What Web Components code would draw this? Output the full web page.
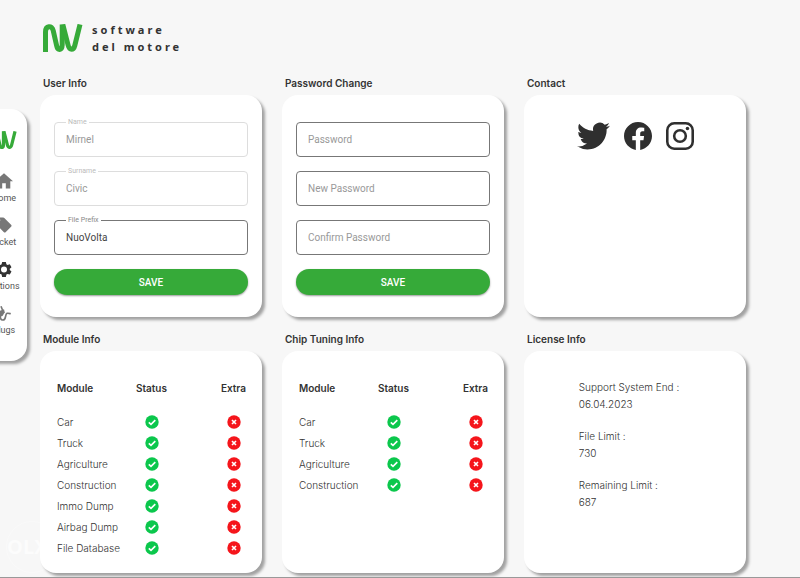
<!DOCTYPE html>
<html lang="en">
<head>
<meta charset="utf-8">
<meta name="viewport" content="width=device-width, initial-scale=1">
<title>Software del Motore</title>
<style>
  :root {
    --green: #36aa39;
    --ink: #333;
    --page: #f7f7f7;
    --shadow: 3px 3px 3px rgba(0, 0, 0, 0.35);
  }

  body {
    margin: 0;
    background: var(--page);
    color: var(--ink);
    font-family: Inter, "Open Sans", sans-serif;
    font-size: 10px;
  }
</style>
</head>
<body>
<app-shell>
  <side-nav slot="nav">
    <nav-item icon="home" href="#home">Home</nav-item>
    <nav-item icon="tag" href="#ticket">Ticket</nav-item>
    <nav-item icon="gear" href="#options" active>Options</nav-item>
    <nav-item icon="plug" href="#plugs">Plugs</nav-item>
  </side-nav>

  <info-panel heading="User Info">
    <settings-form>
      <text-field label="Name" value="Mirnel" disabled></text-field>
      <text-field label="Surname" value="Civic" disabled></text-field>
      <text-field label="File Prefix" value="NuoVolta"></text-field>
    </settings-form>
  </info-panel>

  <info-panel heading="Password Change">
    <settings-form>
      <text-field label="Password" type="password"></text-field>
      <text-field label="New Password" type="password"></text-field>
      <text-field label="Confirm Password" type="password"></text-field>
    </settings-form>
  </info-panel>

  <info-panel heading="Contact">
    <social-links></social-links>
  </info-panel>

  <info-panel heading="Module Info">
    <module-table modules="Car,Truck,Agriculture,Construction,Immo Dump,Airbag Dump,File Database"></module-table>
  </info-panel>

  <info-panel heading="Chip Tuning Info">
    <module-table modules="Car,Truck,Agriculture,Construction"></module-table>
  </info-panel>

  <info-panel heading="License Info">
    <license-list>
      <license-entry label="Support System End :">06.04.2023</license-entry>
      <license-entry label="File Limit :">730</license-entry>
      <license-entry label="Remaining Limit :">687</license-entry>
    </license-list>
  </info-panel>
</app-shell>

<script>
const navIcons = {
  home: '<path d="M9.600 22v-7h4.800v7h6v-9.600H24L12 1.600 0 12.400h3.600V22z"/>',
  tag: '<path d="M21.400 11.600l-9-9A2 2 0 0 0 11 2H4a2 2 0 0 0-2 2v7c0 .6.200 1.100.600 1.400l9 9a2 2 0 0 0 2.800 0l7-7a2 2 0 0 0 0-2.800zM5.500 7a1.500 1.500 0 1 1 0-3 1.500 1.500 0 0 1 0 3z"/>',
  gear: '<path fill-rule="evenodd" d="M9.500 2.500h5l.7 3.100 1.500.9 3-.9 2.300 4-2.300 2.100v1.600l2.300 2.100-2.300 4-3-.9-1.500.9-.7 3.100h-5l-.7-3.100-1.500-.9-3 .9-2.300-4 2.300-2.100v-1.600L2 9.600l2.300-4 3 .9 1.500-.9zM12 8.500a4 4 0 1 0 0 8 4 4 0 0 0 0-8z"/>',
  plug: '<path d="M1 11l11-4 1 4-3 5-5 1.500z"/><path d="M3 5l2 5M8 3l2 5" fill="none" stroke="currentColor" stroke-width="2.200"/><path d="M7 16c0 7 6 7 7 1s3-5 7-4" fill="none" stroke="currentColor" stroke-width="2.200"/>'
}

class BrandMark extends HTMLElement {
  constructor() {
    super()
    this.attachShadow({ mode: 'open' })
    this.shadowRoot.innerHTML = `
      <style>
        :host {
          display: block;
          width: 40px;
          color: var(--green);
        }

        svg {
          display: block;
          width: 100%;
        }
      </style>
      <svg viewBox="0 0 40 28" fill="none" stroke="currentColor" stroke-width="5" stroke-linejoin="round" role="img" aria-label="NV">
        <path d="M2.500 28V8C2.500 1.500 9 1 10.200 6.500L13.600 21.500C14.600 26.800 19 26.800 19.200 21V0.500"/>
        <path d="M19.800 0.500L25.200 21.500C26.500 26.500 30.500 26.500 31.800 21.500L37 0.500"/>
      </svg>
    `
  }
}

class NavItem extends HTMLElement {
  constructor() {
    super()
    this.attachShadow({ mode: 'open' })
  }

  connectedCallback() {
    this.shadowRoot.innerHTML = `
      <style>
        :host {
          display: block;
          color: #777;
        }

        :host([active]) {
          color: var(--ink);
        }

        a {
          display: flex;
          flex-direction: column;
          align-items: center;
          gap: 2px;
          color: inherit;
          text-decoration: none;
        }

        svg {
          width: 18px;
          height: 18px;
          fill: currentColor;
        }

        span {
          color: #555;
          font: 9px/12px Roboto, sans-serif;
        }
      </style>
      <a href="${this.getAttribute('href')}">
        <svg viewBox="0 0 24 24" aria-hidden="true">${navIcons[this.getAttribute('icon')]}</svg>
        <span><slot></slot></span>
      </a>
    `
  }
}

class SideNav extends HTMLElement {
  constructor() {
    super()
    this.attachShadow({ mode: 'open' })
    this.shadowRoot.innerHTML = `
      <style>
        :host {
          display: block;
          box-sizing: border-box;
          width: 46px;
          padding: 22px 0 25px;
          border-radius: 0 16px 16px 0;
          background: #fff;
          box-shadow: var(--shadow);
        }

        brand-mark {
          width: 26px;
          margin: 0 auto 23px;
        }

        nav {
          display: flex;
          flex-direction: column;
          gap: 12px;
        }
      </style>
      <brand-mark></brand-mark>
      <nav aria-label="Main"><slot></slot></nav>
    `
  }
}

class AppShell extends HTMLElement {
  constructor() {
    super()
    this.attachShadow({ mode: 'open' })
    this.shadowRoot.innerHTML = `
      <style>
        :host {
          display: flex;
          align-items: flex-start;
          position: relative;
          border-bottom: 1px solid #999;
          overflow: hidden;
        }

        /* the drawer is tucked partly behind the window edge */
        .drawer {
          flex: none;
          margin: 109px 0 0 -19px;
        }

        .content {
          flex: 1;
          min-width: 0;
          padding: 21px 54px 4px 13px;
        }

        header {
          display: flex;
          align-items: center;
          gap: 9px;
          padding: 0 3px;
          margin-bottom: 20px;
        }

        header p {
          margin: 0;
          font: 700 11px/17px "Noto Sans", sans-serif;
          letter-spacing: 3px;
        }

        .panels {
          display: grid;
          grid-template-columns: repeat(3, minmax(0, 1fr));
          gap: 14px 20px;
        }

        .watermark {
          position: absolute;
          left: 6px;
          bottom: 4px;
          box-sizing: border-box;
          width: 52px;
          height: 52px;
          border: 1px solid #fafafa;
          border-radius: 50%;
          color: #fcfcfc;
          font: 700 20px/50px "Open Sans", sans-serif;
          z-index: -1;
        }
      </style>
      <div class="watermark" aria-hidden="true">OLX</div>
      <div class="drawer"><slot name="nav"></slot></div>
      <div class="content">
        <header>
          <brand-mark></brand-mark>
          <p>software<br>del motore</p>
        </header>
        <main class="panels"><slot></slot></main>
      </div>
    `
  }
}

class InfoPanel extends HTMLElement {
  constructor() {
    super()
    this.attachShadow({ mode: 'open' })
  }

  connectedCallback() {
    this.shadowRoot.innerHTML = `
      <style>
        :host {
          display: flex;
          flex-direction: column;
        }

        h2 {
          margin: 0 3px 4px;
          font-size: 10px;
          line-height: 16px;
          font-weight: 600;
        }

        section {
          flex: 1;
          box-sizing: border-box;
          min-height: 222px;
          padding: 27px 14px 14px;
          border-radius: 16px;
          background: #fff;
          box-shadow: var(--shadow);
        }
      </style>
      <h2>${this.getAttribute('heading')}</h2>
      <section><slot></slot></section>
    `
  }
}

class TextField extends HTMLElement {
  constructor() {
    super()
    this.attachShadow({ mode: 'open' })
  }

  connectedCallback() {
    const label = this.getAttribute('label')
    const value = this.getAttribute('value') || ''
    const type = this.getAttribute('type') || 'text'
    const disabled = this.hasAttribute('disabled') ? 'disabled' : ''

    this.shadowRoot.innerHTML = `
      <style>
        :host {
          display: block;
          position: relative;
          font-family: Roboto, sans-serif;
        }

        input {
          display: block;
          box-sizing: border-box;
          width: 100%;
          height: 35px;
          padding: 0 11px;
          border: 1px solid #777;
          border-radius: 4px;
          background: #fff;
          color: #444;
          font: 10px Roboto, sans-serif;
        }

        input:disabled {
          border-color: #ddd;
          color: #999;
        }

        label {
          position: absolute;
          left: 12px;
          top: 11px;
          color: #999;
          font-size: 10px;
          line-height: 13px;
          pointer-events: none;
        }

        /* label floats onto the border when the field has a value */
        label.floating {
          top: -4px;
          padding: 0 2px;
          background: #fff;
          color: #888;
          font-size: 7px;
          line-height: 9px;
        }

        input:disabled + label.floating {
          color: #bbb;
        }
      </style>
      <input id="field" type="${type}" value="${value}" ${disabled}>
      <label for="field" class="${value ? 'floating' : ''}">${label}</label>
    `
  }
}

class SettingsForm extends HTMLElement {
  constructor() {
    super()
    this.attachShadow({ mode: 'open' })
    this.shadowRoot.innerHTML = `
      <style>
        :host {
          display: block;
        }

        form {
          display: flex;
          flex-direction: column;
          gap: 14px;
        }

        button {
          height: 26px;
          border: 0;
          border-radius: 13px;
          background: var(--green);
          color: #fff;
          font: 500 10px Roboto, sans-serif;
          box-shadow: 0 1px 2px rgba(0, 0, 0, 0.4);
          cursor: pointer;
        }
      </style>
      <form>
        <slot></slot>
        <button type="button">SAVE</button>
      </form>
    `
  }
}

class SocialLinks extends HTMLElement {
  constructor() {
    super()
    this.attachShadow({ mode: 'open' })
    this.shadowRoot.innerHTML = `
      <style>
        :host {
          display: flex;
          justify-content: center;
          gap: 14px;
        }

        a {
          color: #2f2f2f;
        }

        svg {
          display: block;
          width: 28px;
          height: 28px;
          fill: currentColor;
        }

        .wide svg {
          width: 33px;
        }
      </style>
      <a class="wide" href="#twitter" aria-label="Twitter">
        <svg viewBox="0 2 24 20"><path d="M23.950 4.570a10 10 0 0 1-2.820.770 4.960 4.960 0 0 0 2.160-2.720c-.950.550-2 .950-3.130 1.180a4.920 4.920 0 0 0-8.380 4.480C7.690 8.100 4.070 6.130 1.640 3.160a4.820 4.820 0 0 0-.670 2.480c0 1.710.870 3.210 2.190 4.100a4.900 4.900 0 0 1-2.230-.610v.060a4.920 4.920 0 0 0 3.950 4.820 5 5 0 0 1-2.210.090 4.940 4.940 0 0 0 4.600 3.420A9.870 9.870 0 0 1 0 19.540a14 14 0 0 0 7.550 2.210c9.050 0 14-7.500 14-13.980 0-.210 0-.420-.020-.630a9.940 9.940 0 0 0 2.420-2.570z"/></svg>
      </a>
      <a href="#facebook" aria-label="Facebook">
        <svg viewBox="0 0 24 24"><path d="M24 12.070C24 5.440 18.630 0 12 0S0 5.440 0 12.070C0 18.060 4.390 23.030 10.130 23.930v-8.380H7.080v-3.480h3.050V9.430c0-3.010 1.790-4.670 4.530-4.670 1.310 0 2.690.240 2.690.240v2.950h-1.510c-1.500 0-1.960.930-1.960 1.880v2.240h3.330l-.530 3.480h-2.800v8.380C19.610 23.030 24 18.060 24 12.070z"/></svg>
      </a>
      <a href="#instagram" aria-label="Instagram">
        <svg viewBox="0 0 24 24"><g fill="none" stroke="currentColor" stroke-width="2.200"><rect x="1.100" y="1.100" width="21.800" height="21.800" rx="6"/><circle cx="12" cy="12" r="5"/></g><circle cx="18.400" cy="5.600" r="1.500"/></svg>
      </a>
    `
  }
}

class StatusIcon extends HTMLElement {
  constructor() {
    super()
    this.attachShadow({ mode: 'open' })
  }

  connectedCallback() {
    const ok = this.getAttribute('state') === 'ok'
    this.shadowRoot.innerHTML = `
      <style>
        :host {
          display: inline-block;
          vertical-align: middle;
          width: 14px;
          height: 14px;
        }

        svg {
          display: block;
        }
      </style>
      <svg viewBox="0 0 14 14" width="14" height="14" fill="none" stroke="#fff" role="img" aria-label="${ok ? 'Yes' : 'No'}">
        <circle cx="7" cy="7" r="6.700" fill="${ok ? '#0bc74c' : '#f5151b'}" stroke="none"/>
        <path d="${ok ? 'M3.800 7.300l2.200 2.100 4.300-4.300' : 'M5 5l4 4M9 5l-4 4'}" stroke-width="1.600"/>
      </svg>
    `
  }
}

class ModuleTable extends HTMLElement {
  constructor() {
    super()
    this.attachShadow({ mode: 'open' })
  }

  connectedCallback() {
    const rows = this.getAttribute('modules').split(',').map((name) => `
      <tr>
        <td>${name}</td>
        <td><status-icon state="ok"></status-icon></td>
        <td><status-icon state="off"></status-icon></td>
      </tr>
    `).join('')

    this.shadowRoot.innerHTML = `
      <style>
        :host {
          display: block;
        }

        table {
          width: 100%;
          border-collapse: collapse;
          table-layout: fixed;
        }

        th, td {
          height: 21px;
          padding: 0;
          line-height: 14px;
          text-align: center;
          white-space: nowrap;
        }

        td {
          font-weight: 300;
        }

        th {
          height: 20px;
          padding-bottom: 13px;
          font-weight: 600;
        }

        th:first-child, td:first-child {
          width: 36%;
          padding-left: 3px;
          text-align: left;
        }

        th:last-child, td:last-child {
          width: 36%;
          padding-right: 2px;
          text-align: right;
        }

        /* keeps the icon under the middle of its heading */
        td:last-child {
          padding-right: 7px;
        }
      </style>
      <table>
        <thead>
          <tr><th scope="col">Module</th><th scope="col">Status</th><th scope="col">Extra</th></tr>
        </thead>
        <tbody>${rows}</tbody>
      </table>
    `
  }
}

class LicenseEntry extends HTMLElement {
  constructor() {
    super()
    this.attachShadow({ mode: 'open' })
  }

  connectedCallback() {
    this.shadowRoot.innerHTML = `
      <style>
        :host {
          display: block;
          font-weight: 300;
          line-height: 17px;
        }

        p {
          margin: 0;
        }
      </style>
      <p>${this.getAttribute('label')}</p>
      <p><slot></slot></p>
    `
  }
}

class LicenseList extends HTMLElement {
  constructor() {
    super()
    this.attachShadow({ mode: 'open' })
    this.shadowRoot.innerHTML = `
      <style>
        :host {
          display: flex;
          flex-direction: column;
          gap: 15px;
          padding: 1px 0 0 21%;
        }
      </style>
      <slot></slot>
    `
  }
}

customElements.define('brand-mark', BrandMark)
customElements.define('nav-item', NavItem)
customElements.define('side-nav', SideNav)
customElements.define('app-shell', AppShell)
customElements.define('info-panel', InfoPanel)
customElements.define('text-field', TextField)
customElements.define('settings-form', SettingsForm)
customElements.define('social-links', SocialLinks)
customElements.define('status-icon', StatusIcon)
customElements.define('module-table', ModuleTable)
customElements.define('license-entry', LicenseEntry)
customElements.define('license-list', LicenseList)
</script>
</body>
</html>
